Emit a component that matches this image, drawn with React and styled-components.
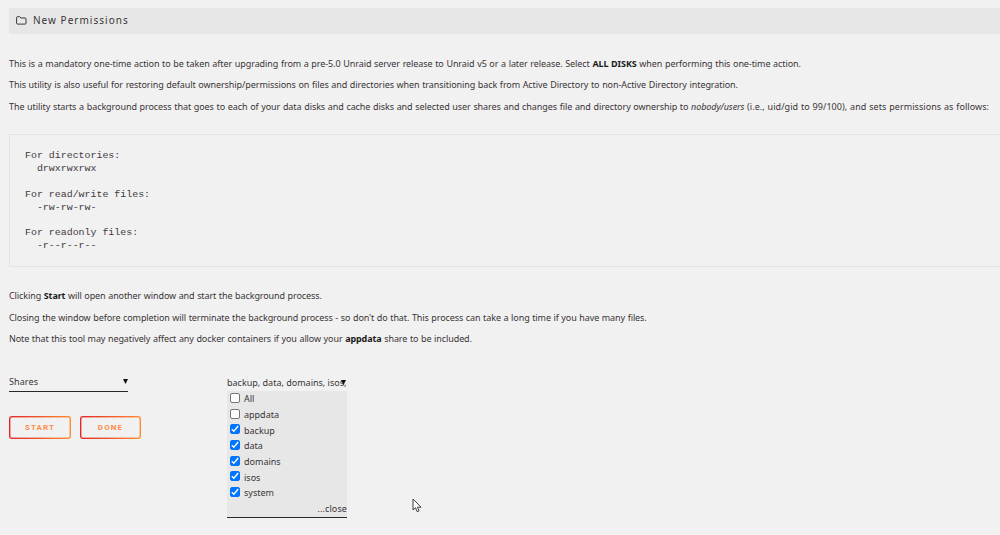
import React from 'react'
import styled, {createGlobalStyle} from 'styled-components'

const GlobalStyle = createGlobalStyle`
    * { box-sizing: border-box; }
    body {
        margin: 0;
        background: #f1f1f1;
        color: #3a3537;
        font-family: 'Noto Sans', sans-serif;
        font-size: 9px;
        overflow: hidden;
    }
    b { color: #1c1b1b; }
`

const Page = styled.main`
    width: 1000px;
    height: 535px;
    padding: 8px 0 0 9px;
    overflow: hidden;
`

const Title = styled.header`
    display: flex;
    align-items: center;
    height: 26px;
    padding: 0 0 2px 7px;
    gap: 6px;
    background: #e7e7e7;
    font-size: 10px;
    letter-spacing: 1.02px;
`

const Text = styled.p`
    margin: 0;
    height: 21.6px;
    line-height: 14px;
    letter-spacing: ${p => p.$spacing}px;
    word-spacing: 0.4px;
    white-space: nowrap;
`

const Tail = styled.span`
    letter-spacing: 0.06px;
`

const Intro = styled.section`
    padding-top: 22.6px;
    height: 100px;
`

const Listing = styled.pre`
    margin: 0;
    height: 133px;
    padding: 15px 0 0 15px;
    border: 1px solid #e3e3e3;
    border-right: 0;
    font-family: 'Liberation Mono', monospace;
    font-size: 9.94px;
    line-height: 12.9px;
    color: #3f3a3d;
`

const Notes = styled.section`
    padding-top: 22px;
    height: 108px;
`

const Form = styled.section`
    display: flex;
    align-items: flex-start;
`

const Column = styled.div`
    width: 218px;
`

const Select = styled.div`
    display: flex;
    justify-content: space-between;
    align-items: center;
    width: 119px;
    height: 17px;
    padding-bottom: 3px;
    border-bottom: 1px solid #2b2628;
    letter-spacing: 0.1px;
`

const Arrow = styled.svg`
    flex: none;
    width: 5px;
    height: 5px;
`

const Buttons = styled.div`
    display: flex;
    gap: 9px;
    margin-top: 24px;
`

const Button = styled.button`
    width: ${p => p.$width}px;
    height: 23px;
    padding: 1px;
    border: 1px solid transparent;
    border-radius: 3px;
    background:
        linear-gradient(#f1f1f1, #f1f1f1) content-box,
        linear-gradient(#f1f1f199, #f1f1f199) padding-box,
        linear-gradient(90deg, #e22828 0%, #ff8c2f 100%) border-box;
    color: #ff8c4a;
    font-family: Roboto, sans-serif;
    font-size: 8px;
    font-weight: 700;
    line-height: 19px;
    letter-spacing: 1.1px;
`

const Dropdown = styled.div`
    width: 120px;
    height: 143px;
    border-bottom: 1px solid #2b2628;
`

const Selected = styled.div`
    position: relative;
    height: 16px;
    line-height: 15px;
    white-space: nowrap;
`

const OverArrow = styled(Arrow)`
    position: absolute;
    right: 1px;
    top: 5px;
`

const Options = styled.div`
    height: 126px;
    background: #e7e7e7;
`

const Option = styled.label`
    display: flex;
    align-items: center;
    gap: 4px;
    height: 15.7px;
    padding-left: 3px;
`

const Box = styled.span`
    display: flex;
    width: 10px;
    height: 10px;
    margin-top: -2px;
    border: 1px solid ${p => p.$checked ? '#0075ff' : '#767676'};
    border-radius: 2px;
    background: ${p => p.$checked ? '#0075ff' : '#fff'};
`

const Close = styled.div`
    height: 15.75px;
    line-height: 16px;
    letter-spacing: 0.1px;
    text-align: right;
`

const Pointer = styled.svg`
    position: absolute;
    left: 412px;
    top: 498px;
`

const shares = [
    {name: 'All', checked: false},
    {name: 'appdata', checked: false},
    {name: 'backup', checked: true},
    {name: 'data', checked: true},
    {name: 'domains', checked: true},
    {name: 'isos', checked: true},
    {name: 'system', checked: true}
]

const permissions = `For directories:
  drwxrwxrwx

For read/write files:
  -rw-rw-rw-

For readonly files:
  -r--r--r--`

const Triangle = ({as: Shape = Arrow}) => (
    <Shape viewBox="0 0 5 5"><path d="M0 0h5L2.5 5z" fill="#111" /></Shape>
)

const FolderIcon = () => (
    <svg width="11" height="9" viewBox="0 0 11 9" fill="none" stroke="#3a3537" strokeWidth="1">
        <path d="M1.5.7h2.2l1.3 1.3h4.2q.8 0 .8.8v4.4q0 .9-.9.9H1.5q-.9 0-.9-.9V1.6q0-.9.9-.9z" />
    </svg>
)

const App = () => (
    <>
        <GlobalStyle />
        <Page>
            <Title><FolderIcon />New Permissions</Title>
            <Intro>
                <Text $spacing={-0.08}>This is a mandatory one-time action to be taken after upgrading from a pre-5.0 Unraid server release to Unraid v5 or a later release. Select <b>ALL DISKS</b> when performing this one-time action.</Text>
                <Text $spacing={-0.08}>This utility is also useful for restoring default ownership/permissions on files and directories when transitioning back from Active Directory to non-Active Directory integration.</Text>
                <Text $spacing={-0.07}>The utility starts a background process that goes to each of your data disks and cache disks and selected user shares and changes file and directory ownership to <i>nobody/users</i> <Tail>(i.e., uid/gid to 99/100), and sets permissions as follows:</Tail></Text>
            </Intro>
            <Listing>{permissions}</Listing>
            <Notes>
                <Text $spacing={-0.1}>Clicking <b>Start</b> will open another window and start the background process.</Text>
                <Text $spacing={-0.1}>Closing the window before completion will terminate the background process - so don't do that. This process can take a long time if you have many files.</Text>
                <Text $spacing={-0.1}>Note that this tool may negatively affect any docker containers if you allow your <b>appdata</b> share to be included.</Text>
            </Notes>
            <Form>
                <Column>
                    <Select>Shares<Triangle /></Select>
                    <Buttons>
                        <Button $width={62}>START</Button>
                        <Button $width={61}>DONE</Button>
                    </Buttons>
                </Column>
                <Dropdown>
                    <Selected>backup, data, domains, isos,<Triangle as={OverArrow} /></Selected>
                    <Options>
                        {shares.map(share => (
                            <Option key={share.name}>
                                <Box $checked={share.checked}>
                                    {share.checked && (
                                        <svg width="8" height="8" viewBox="0 0 7 7" fill="none" stroke="#fff" strokeWidth="1.2">
                                            <path d="M.7 3.7l1.8 1.8L6.3.9" />
                                        </svg>
                                    )}
                                </Box>
                                {share.name}
                            </Option>
                        ))}
                        <Close>...close</Close>
                    </Options>
                </Dropdown>
            </Form>
            <Pointer width="10" height="15" viewBox="0 0 10 15">
                <path d="M1 1v11l2.5-2.3L5.2 13.7l1.9-.8-1.7-3.7H9z" fill="#fff" stroke="#3c3c46" strokeWidth="1" />
            </Pointer>
        </Page>
    </>
)

export default App
